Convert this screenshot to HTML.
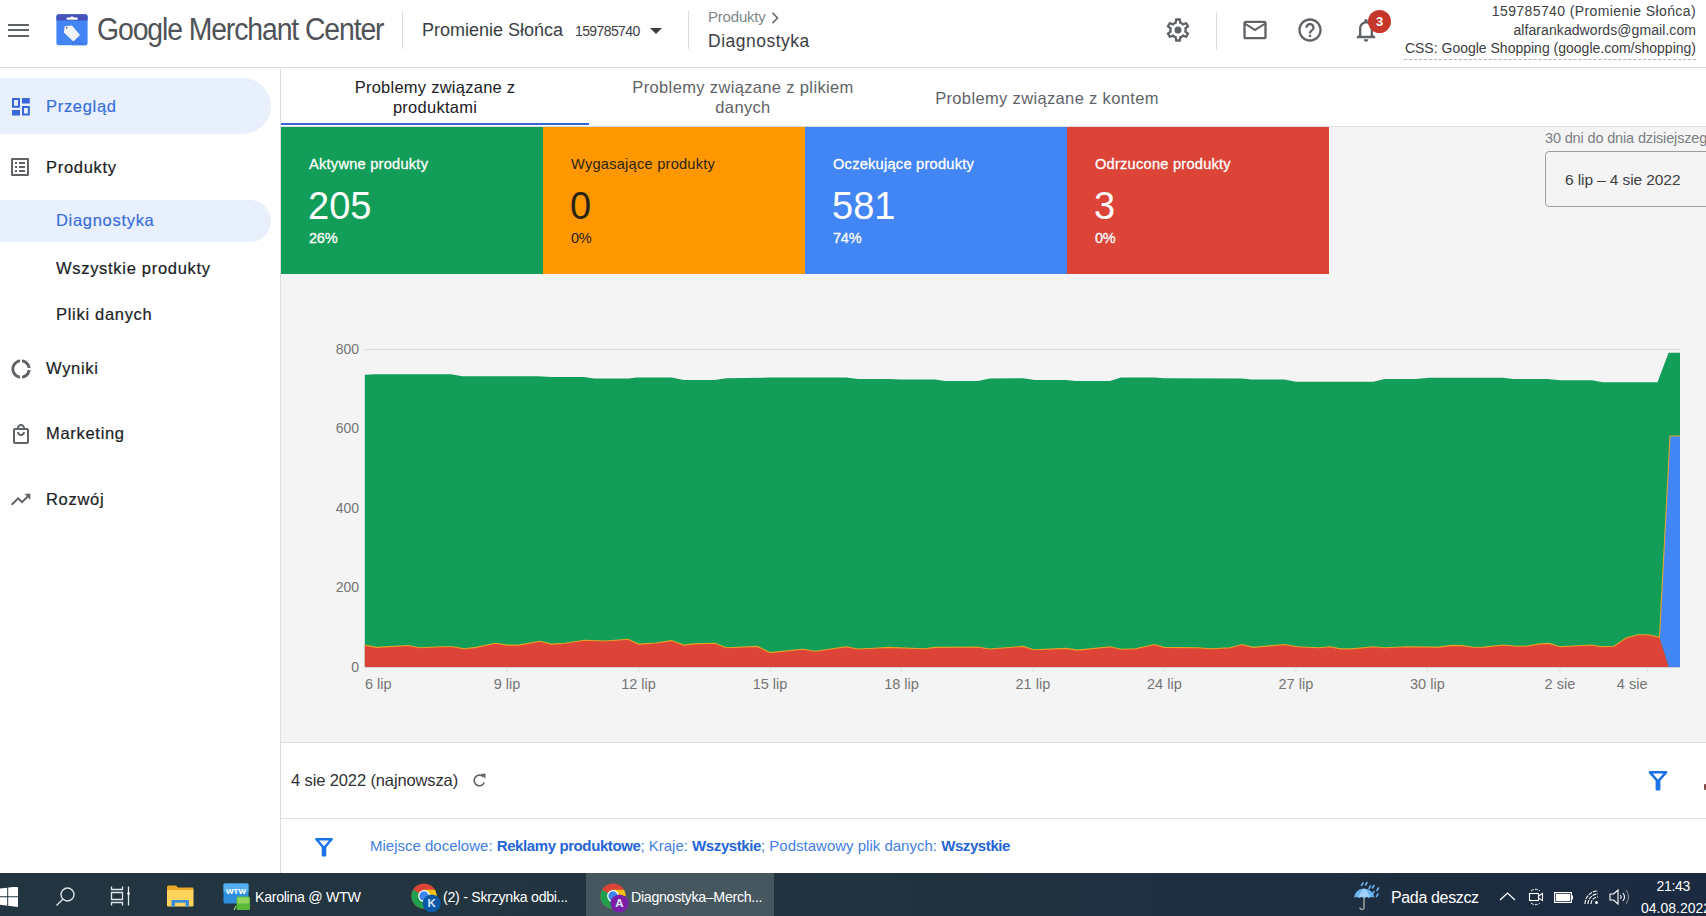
<!DOCTYPE html>
<html><head><meta charset="utf-8">
<style>
*{margin:0;padding:0;box-sizing:border-box}
html,body{width:1706px;height:916px;overflow:hidden;background:#fff;font-family:"Liberation Sans",sans-serif;color:#202124}
.a{position:absolute;white-space:nowrap}
#hdr{position:absolute;left:0;top:0;width:1706px;height:68px;background:#fff;border-bottom:1px solid #dadce0}
#side{position:absolute;left:0;top:69px;width:281px;height:804px;background:#fff;border-right:1px solid #dadce0}
#main{position:absolute;left:281px;top:69px;width:1425px;height:804px;background:#f4f4f4}
#tabs{position:absolute;left:0;top:0;width:1425px;height:58px;background:#fff;border-bottom:1px solid #dadce0}
.tab{position:absolute;text-align:center;font-size:16.5px;line-height:20px;color:#5f6368}
.card{position:absolute;top:58px;height:147px;color:#fff}
.card .t{position:absolute;left:28px;top:28.5px;font-size:14.6px;letter-spacing:0.25px;-webkit-text-stroke:0.3px currentColor}
.card .n{position:absolute;left:27px;top:58px;font-size:38px}
.card .p{position:absolute;left:28px;top:103px;font-size:14.5px;letter-spacing:-0.2px;-webkit-text-stroke:0.3px currentColor}
#task{position:absolute;left:0;top:873px;width:1706px;height:43px;background:linear-gradient(to right,#223540 0%,#213440 45%,#1b2a40 100%)}
.yl{left:300px;width:59px;text-align:right;font-size:14px;color:#757575}
.xl{top:676px;font-size:14.5px;color:#757575}
.ttxt{position:absolute;top:16.1px;font-size:14.2px;color:#fff;white-space:nowrap}
</style></head><body>
<div id="hdr">
  <!-- hamburger -->
  <div class="a" style="left:8px;top:24px;width:21px;height:2px;background:#5f6368"></div>
  <div class="a" style="left:8px;top:29px;width:21px;height:2px;background:#5f6368"></div>
  <div class="a" style="left:8px;top:35px;width:21px;height:2px;background:#5f6368"></div>
  <!-- logo -->
  <svg class="a" style="left:56px;top:14px" width="32" height="32" viewBox="0 0 32 32">
    <rect x="0.4" y="0.2" width="31.2" height="31" rx="2.5" fill="#4285f4"/>
    <path d="M16 21 L31.6 31.2 H16Z" fill="#3b78e7" opacity="0.6"/>
    <path d="M0.4 2.7 Q0.4 0.2 2.9 0.2 H29.1 Q31.6 0.2 31.6 2.7 V6.6 H0.4Z" fill="#4551bd"/>
    <rect x="10.4" y="3.6" width="11.4" height="2.2" rx="1.1" fill="#fff"/>
    <path d="M13.5 4 Q16 1.2 18.5 4Z" fill="#fff"/>
    <path d="M8.6 12.2 L16 11.6 L24 21 L17.4 27.6 L7.8 18.4Z" fill="#f1f3f4"/>
    <circle cx="10.6" cy="13.8" r="0.9" fill="#5a6a8a"/>
  </svg>
  <div class="a" style="left:97px;top:11.5px;font-size:31px;color:#4f5257;letter-spacing:-1.2px;transform:scaleX(0.915);transform-origin:0 0">Google Merchant Center</div>
  <div class="a" style="left:402px;top:11px;width:1px;height:38px;background:#dadce0"></div>
  <div class="a" style="left:422px;top:19.8px;font-size:18px;color:#3c4043">Promienie Słońca</div>
  <div class="a" style="left:575px;top:23.4px;font-size:14px;color:#3c4043;letter-spacing:-0.6px">159785740</div>
  <svg class="a" style="left:649px;top:26.8px" width="14" height="8" viewBox="0 0 14 8"><path d="M1 1 L7 7 L13 1Z" fill="#3c4043"/></svg>
  <div class="a" style="left:688px;top:11px;width:1px;height:38px;background:#dadce0"></div>
  <div class="a" style="left:708px;top:8px;font-size:15px;color:#80868b;letter-spacing:-0.2px">Produkty</div>
  <svg class="a" style="left:770px;top:11px" width="10" height="14" viewBox="0 0 10 14"><path d="M2.5 1.8 L7.5 7 L2.5 12.2" stroke="#5f6368" stroke-width="1.6" fill="none"/></svg>
  <div class="a" style="left:708px;top:30.8px;font-size:17.5px;color:#3c4043;letter-spacing:0.5px">Diagnostyka</div>
  <!-- icons -->
  <svg class="a" style="left:1164.2px;top:16.3px" width="28" height="28" viewBox="0 0 24 24"><path fill="#5f6368" d="M19.43 12.98c.04-.32.07-.64.07-.98 0-.34-.03-.66-.07-.98l2.11-1.65c.19-.15.24-.42.12-.64l-2-3.46a.5.5 0 0 0-.61-.22l-2.49 1c-.52-.4-1.08-.73-1.690-.98l-.38-2.65A.488.488 0 0 0 14 2h-4c-.25 0-.46.18-.49.42l-.38 2.65c-.61.25-1.17.59-1.69.98l-2.49-1a.566.566 0 0 0-.18-.03c-.17 0-.34.09-.43.25l-2 3.46c-.13.22-.07.49.12.64l2.11 1.65c-.04.32-.07.65-.07.98 0 .33.03.66.07.98l-2.11 1.65c-.19.15-.24.42-.12.64l2 3.46a.5.5 0 0 0 .61.22l2.49-1c.52.4 1.08.73 1.69.98l.38 2.65c.03.24.24.42.49.42h4c.25 0 .46-.18.49-.42l.38-2.65c.61-.25 1.17-.59 1.69-.98l2.49 1c.06.02.12.03.18.03.17 0 .34-.09.43-.25l2-3.46c.12-.22.07-.49-.12-.64l-2.11-1.65zm-1.98-1.71c.04.31.05.52.05.73 0 .21-.02.43-.05.73l-.14 1.13.89.7 1.08.84-.7 1.21-1.270-.51-1.04-.42-.9.68c-.43.32-.84.56-1.25.73l-1.06.43-.16 1.130-.2 1.35h-1.4l-.19-1.35-.16-1.13-1.06-.43c-.43-.18-.83-.41-1.23-.71l-.91-.7-1.06.43-1.27.51-.7-1.21 1.08-.84.89-.7-.14-1.13c-.03-.31-.05-.54-.05-.74s.02-.43.05-.73l.14-1.13-.89-.7-1.08-.84.7-1.21 1.27.51 1.04.42.9-.68c.43-.32.84-.56 1.25-.73l1.06-.43.16-1.13.2-1.35h1.39l.19 1.35.16 1.13 1.06.43c.43.18.83.41 1.23.71l.91.7 1.06-.43 1.27-.51.7 1.21-1.07.85-.89.7.14 1.13z"/><circle cx="12" cy="12" r="3" fill="#5f6368"/></svg>
  <div class="a" style="left:1216px;top:12px;width:1px;height:38px;background:#dadce0"></div>
  <svg class="a" style="left:1240.6px;top:16.4px" width="28" height="28" viewBox="0 0 24 24"><path fill="#5f6368" d="M22 6c0-1.1-.9-2-2-2H4c-1.1 0-2 .9-2 2v12c0 1.1.9 2 2 2h16c1.1 0 2-.9 2-2V6zm-2 0l-8 5-8-5h16zm0 12H4V8l8 5 8-5v10z"/></svg>
  <svg class="a" style="left:1296px;top:16px" width="28" height="28" viewBox="0 0 24 24"><path fill="#5f6368" d="M11 18h2v-2h-2v2zm1-16C6.48 2 2 6.48 2 12s4.48 10 10 10 10-4.48 10-10S17.52 2 12 2zm0 18c-4.41 0-8-3.59-8-8s3.59-8 8-8 8 3.59 8 8-3.59 8-8 8zm0-14c-2.21 0-4 1.79-4 4h2c0-1.1.9-2 2-2s2 .9 2 2c0 2-3 1.75-3 5h2c0-2.25 3-2.5 3-5 0-2.21-1.79-4-4-4z"/></svg>
  <svg class="a" style="left:1352px;top:16px" width="28" height="28" viewBox="0 0 24 24"><path fill="#5f6368" d="M12 22c1.1 0 2-.9 2-2h-4c0 1.1.89 2 2 2zm6-6v-5c0-3.07-1.64-5.64-4.5-6.32V4c0-.83-.67-1.5-1.5-1.5s-1.5.67-1.5 1.5v.68C7.63 5.36 6 7.92 6 11v5l-2 2v1h16v-1l-2-2zm-2 1H8v-6c0-2.48 1.51-4.5 4-4.5s4 2.02 4 4.5v6z"/></svg>
  <div class="a" style="left:1367px;top:9px;width:24px;height:24px;border-radius:12px;background:#c5372a;color:#fff;font-size:13px;font-weight:bold;text-align:center;line-height:23px;width:23px;height:23px;left:1368px;top:10px">3</div>
  <div class="a" style="right:10px;top:3px;font-size:14px;color:#3c4043;text-align:right;letter-spacing:0.4px">159785740 (Promienie Słońca)</div>
  <div class="a" style="right:10px;top:21.6px;font-size:14px;color:#3c4043;text-align:right;letter-spacing:0.07px">alfarankadwords@gmail.com</div>
  <div class="a" style="right:10px;top:40.2px;font-size:14px;color:#3c4043;text-align:right">CSS: Google Shopping (google.com/shopping)</div><div class="a" style="left:1404px;top:58.5px;width:292px;height:0;border-top:1.5px dashed #b0b4b8"></div>
</div>

<div id="side">
  <div class="a" style="left:0;top:9px;width:271px;height:56px;background:#e8f0fe;border-radius:0 28px 28px 0"></div>
  <svg class="a" style="left:12px;top:29px" width="18" height="18" viewBox="0 0 18 18"><path fill="#3767d9" fill-rule="evenodd" d="M0 0h8v9.7H0zM2 2v5.7h4V2zM10 0h7.8v5.6H10zM0 12.1h8v5.4H0zM10 8.1h7.8v9.4H10zM12 10v5.6h3.9V10z"/></svg>
  <div class="a" style="left:46px;top:28.1px;font-size:16.5px;letter-spacing:0.7px;-webkit-text-stroke:0.2px currentColor;color:#3b6fd8">Przegląd</div>

  <svg class="a" style="left:8px;top:86.4px" width="24" height="24" viewBox="0 0 24 24"><path fill="#5f6368" d="M19 5v14H5V5h14m1.1-2H3.9c-.5 0-.9.4-.9.9v16.2c0 .4.4.9.9.9h16.2c.4 0 .9-.5.9-.9V3.9c0-.5-.5-.9-.9-.9zM11 7h6v2h-6V7zm0 4h6v2h-6v-2zm0 4h6v2h-6zM7 7h2v2H7zm0 4h2v2H7zm0 4h2v2H7z"/></svg>
  <div class="a" style="left:46px;top:88.7px;font-size:16.5px;letter-spacing:0.7px;-webkit-text-stroke:0.2px currentColor;color:#202124">Produkty</div>

  <div class="a" style="left:0;top:131px;width:271px;height:42px;background:#e8f0fe;border-radius:0 21px 21px 0"></div>
  <div class="a" style="left:56px;top:141.8px;font-size:16.5px;letter-spacing:0.7px;-webkit-text-stroke:0.2px currentColor;color:#3b6fd8">Diagnostyka</div>
  <div class="a" style="left:56px;top:189.5px;font-size:16.5px;letter-spacing:0.7px;-webkit-text-stroke:0.2px currentColor;color:#202124">Wszystkie produkty</div>
  <div class="a" style="left:56px;top:235.5px;font-size:16.5px;letter-spacing:0.7px;-webkit-text-stroke:0.2px currentColor;color:#202124">Pliki danych</div>

  <svg class="a" style="left:8.7px;top:287.6px" width="24" height="24" viewBox="0 0 24 24"><g transform="translate(12 12) scale(0.96) translate(-12 -12)"><path fill="#5f6368" d="M11 5.08V2c-5 .5-9 4.81-9 10s4 9.5 9 10v-3.08c-3-.48-6-3.4-6-6.92s3-6.44 6-6.92zM18.97 11H22c-.47-5-4-8.53-9-9v3.08C16 5.51 18.54 8 18.97 11zM13 18.92V22c5-.47 8.53-4 9-9h-3.03c-.43 3-2.97 5.49-5.97 5.92z"/></g></svg>
  <div class="a" style="left:46px;top:289.7px;font-size:16.5px;letter-spacing:0.7px;-webkit-text-stroke:0.2px currentColor;color:#202124">Wyniki</div>

  <svg class="a" style="left:8.5px;top:353px" width="24" height="24" viewBox="0 0 24 24"><path fill="#5f6368" d="M18 6h-2c0-2.21-1.79-4-4-4S8 3.79 8 6H6c-1.1 0-2 .9-2 2v12c0 1.1.9 2 2 2h12c1.1 0 2-.9 2-2V8c0-1.1-.9-2-2-2zm-6-2c1.1 0 2 .9 2 2h-4c0-1.1.9-2 2-2zm6 16H6V8h12v12zm-6-8c-1.1 0-2-.9-2-2H8c0 2.210 1.79 4 4 4s4-1.79 4-4h-2c0 1.1-.9 2-2 2z"/></svg>
  <div class="a" style="left:46px;top:355.1px;font-size:16.5px;letter-spacing:0.7px;-webkit-text-stroke:0.2px currentColor;color:#202124">Marketing</div>

  <svg class="a" style="left:9px;top:418.8px" width="23.3" height="23.3" viewBox="0 0 24 24"><path fill="#5f6368" d="M16 6l2.29 2.29-4.88 4.88-4-4L2 16.59 3.41 18l6-6 4 4 6.3-6.29L22 12V6z"/></svg>
  <div class="a" style="left:46px;top:420.6px;font-size:16.5px;letter-spacing:0.7px;-webkit-text-stroke:0.2px currentColor;color:#202124">Rozwój</div>
</div>

<div id="main">
  <div id="tabs">
    <div class="tab" style="left:0;top:7.5px;width:308px;color:#202124;letter-spacing:0.25px">Problemy związane z<br>produktami</div>
    <div class="tab" style="left:308px;top:8px;width:308px;letter-spacing:0.35px">Problemy związane z plikiem<br>danych</div>
    <div class="tab" style="left:616px;top:18.5px;width:300px;letter-spacing:0.35px">Problemy związane z kontem</div>
    <div class="a" style="left:0;top:54px;width:308px;height:2px;background:#3367d6"></div>
  </div>
  <div class="card" style="left:0;width:262px;background:#129d58">
    <div class="t">Aktywne produkty</div><div class="n">205</div><div class="p">26%</div>
  </div>
  <div class="card" style="left:262px;width:262px;background:#ff9800;color:#2a2418">
    <div class="t" style="-webkit-text-stroke:0">Wygasające produkty</div><div class="n">0</div><div class="p" style="-webkit-text-stroke:0">0%</div>
  </div>
  <div class="card" style="left:524px;width:262px;background:#4285f4">
    <div class="t">Oczekujące produkty</div><div class="n">581</div><div class="p">74%</div>
  </div>
  <div class="card" style="left:786px;width:262px;background:#db4437">
    <div class="t">Odrzucone produkty</div><div class="n">3</div><div class="p">0%</div>
  </div>
  <div class="a" style="left:1264px;top:61px;font-size:14.5px;color:#7c7f84;letter-spacing:-0.15px">30 dni do dnia dzisiejszego</div>
  <div class="a" style="left:1264px;top:82px;width:200px;height:56px;border:1px solid #9e9e9e;border-radius:4px;background:#f4f4f4"></div>
  <div class="a" style="left:1284px;top:102px;font-size:15.5px;color:#3c4043;letter-spacing:-0.1px">6 lip – 4 sie 2022</div>


  <div class="a" style="left:0;top:673px;width:1425px;height:131px;background:#fff;border-top:1px solid #e0e0e0"></div>
  <div class="a" style="left:10px;top:702px;font-size:16.5px;color:#303134;letter-spacing:-0.12px">4 sie 2022 (najnowsza)</div>
  <div class="a" style="left:0;top:749px;width:1425px;height:1px;background:#e0e0e0"></div>
</div>

<!--CHART-->
<svg class="a" style="left:300px;top:330px" width="1406" height="380" viewBox="300 330 1406 380">
<line x1="365" y1="349.5" x2="1680" y2="349.5" stroke="#dcdcdc" stroke-width="1.2"/>
<polygon points="364.8,374.7 375.5,374.3 451.0,374.3 462.5,376.2 538.0,376.2 551.5,377.0 584.0,377.0 594.0,378.5 629.0,378.5 636.6,377.6 671.4,377.6 684.0,380.0 714.8,380.0 726.4,378.2 769.0,377.6 846.3,377.6 858.0,378.9 889.0,378.9 900.5,379.5 935.0,379.5 945.0,380.9 977.9,380.9 989.5,378.5 1023.0,378.2 1034.8,380.0 1065.8,380.0 1075.4,380.9 1110.0,380.9 1121.0,377.4 1154.7,377.4 1164.4,378.2 1241.8,378.5 1251.4,379.5 1284.3,379.5 1296.0,381.8 1373.5,381.8 1384.6,378.9 1415.8,378.9 1429.0,377.7 1502.7,377.7 1513.8,379.1 1547.2,379.1 1560.6,380.2 1591.8,380.2 1603.0,382.2 1657.5,382.2 1668.6,352.8 1680.0,352.8 1680.0,667.0 364.8,667.0" fill="#129d58"/>
<polygon points="364.8,645.1 376.4,647.4 408.4,645.5 420.0,647.8 441.2,646.8 452.8,646.8 464.4,648.8 476.0,647.4 495.4,643.2 507.0,645.1 518.6,645.1 539.9,641.2 551.5,644.1 565.0,643.2 584.4,640.3 605.6,641.0 627.9,639.3 638.5,644.1 656.0,643.0 671.4,640.6 683.9,645.1 693.5,643.9 714.8,643.2 726.4,647.8 757.4,646.4 770.0,652.6 802.8,649.3 815.4,651.3 846.3,646.8 858.0,649.0 873.4,648.2 888.9,647.4 923.7,648.8 935.3,647.4 977.9,647.0 989.5,649.0 1023.2,646.4 1033.8,649.7 1065.8,648.4 1077.4,650.1 1110.3,646.8 1120.9,649.3 1135.4,648.8 1154.7,644.5 1164.4,647.4 1197.3,647.8 1210.8,648.8 1230.2,647.8 1241.8,644.5 1253.4,647.4 1284.3,644.5 1297.9,646.8 1319.1,647.8 1330.0,646.7 1340.8,648.9 1351.7,648.9 1373.4,646.7 1384.2,647.8 1405.9,646.7 1438.4,647.1 1451.4,645.4 1462.3,645.6 1473.1,647.3 1484.0,647.1 1503.5,645.0 1516.5,646.3 1527.4,646.0 1538.2,644.1 1549.0,643.4 1559.9,646.7 1590.2,645.0 1603.3,646.7 1614.1,646.3 1626.0,638.0 1638.0,634.8 1648.8,634.8 1659.5,637.2 1668.8,667.0 364.8,667.0" fill="#db4437"/>
<polygon points="1659.5,637.2 1670.0,436.0 1680.0,436.0 1680.0,667.0 1668.8,667.0" fill="#4285f4"/>
<polyline points="364.8,645.1 376.4,647.4 408.4,645.5 420.0,647.8 441.2,646.8 452.8,646.8 464.4,648.8 476.0,647.4 495.4,643.2 507.0,645.1 518.6,645.1 539.9,641.2 551.5,644.1 565.0,643.2 584.4,640.3 605.6,641.0 627.9,639.3 638.5,644.1 656.0,643.0 671.4,640.6 683.9,645.1 693.5,643.9 714.8,643.2 726.4,647.8 757.4,646.4 770.0,652.6 802.8,649.3 815.4,651.3 846.3,646.8 858.0,649.0 873.4,648.2 888.9,647.4 923.7,648.8 935.3,647.4 977.9,647.0 989.5,649.0 1023.2,646.4 1033.8,649.7 1065.8,648.4 1077.4,650.1 1110.3,646.8 1120.9,649.3 1135.4,648.8 1154.7,644.5 1164.4,647.4 1197.3,647.8 1210.8,648.8 1230.2,647.8 1241.8,644.5 1253.4,647.4 1284.3,644.5 1297.9,646.8 1319.1,647.8 1330.0,646.7 1340.8,648.9 1351.7,648.9 1373.4,646.7 1384.2,647.8 1405.9,646.7 1438.4,647.1 1451.4,645.4 1462.3,645.6 1473.1,647.3 1484.0,647.1 1503.5,645.0 1516.5,646.3 1527.4,646.0 1538.2,644.1 1549.0,643.4 1559.9,646.7 1590.2,645.0 1603.3,646.7 1614.1,646.3 1626.0,638.0 1638.0,634.8 1648.8,634.8 1659.5,637.2 1670,436 1680,436" fill="none" stroke="#f4a622" stroke-width="1.1" stroke-opacity="0.9"/>
<line x1="365" y1="667.5" x2="1680" y2="667.5" stroke="#d0d0d0" stroke-width="1"/>
<line x1="507.0" y1="667" x2="507.0" y2="672" stroke="#dedede" stroke-width="1"/>
<line x1="638.5" y1="667" x2="638.5" y2="672" stroke="#dedede" stroke-width="1"/>
<line x1="770.0" y1="667" x2="770.0" y2="672" stroke="#dedede" stroke-width="1"/>
<line x1="901.5" y1="667" x2="901.5" y2="672" stroke="#dedede" stroke-width="1"/>
<line x1="1032.9" y1="667" x2="1032.9" y2="672" stroke="#dedede" stroke-width="1"/>
<line x1="1164.4" y1="667" x2="1164.4" y2="672" stroke="#dedede" stroke-width="1"/>
<line x1="1295.9" y1="667" x2="1295.9" y2="672" stroke="#dedede" stroke-width="1"/>
<line x1="1427.4" y1="667" x2="1427.4" y2="672" stroke="#dedede" stroke-width="1"/>
<line x1="1559.9" y1="667" x2="1559.9" y2="672" stroke="#dedede" stroke-width="1"/>
<line x1="1647.7" y1="667" x2="1647.7" y2="672" stroke="#dedede" stroke-width="1"/>
</svg>
<!--/CHART-->
<div class="yl a" style="top:341px">800</div><div class="yl a" style="top:420px">600</div><div class="yl a" style="top:500px">400</div><div class="yl a" style="top:579px">200</div><div class="yl a" style="top:659px">0</div>
<div class="xl a" style="left:365px">6 lip</div>
<div class="xl a" style="left:457.0px;width:100px;text-align:center">9 lip</div>
<div class="xl a" style="left:588.5px;width:100px;text-align:center">12 lip</div>
<div class="xl a" style="left:720.0px;width:100px;text-align:center">15 lip</div>
<div class="xl a" style="left:851.5px;width:100px;text-align:center">18 lip</div>
<div class="xl a" style="left:982.9px;width:100px;text-align:center">21 lip</div>
<div class="xl a" style="left:1114.4px;width:100px;text-align:center">24 lip</div>
<div class="xl a" style="left:1245.9px;width:100px;text-align:center">27 lip</div>
<div class="xl a" style="left:1377.4px;width:100px;text-align:center">30 lip</div>
<div class="xl a" style="left:1509.9px;width:100px;text-align:center">2 sie</div>
<div class="xl a" style="left:1547.5px;width:100px;text-align:right">4 sie</div>
<svg class="a" style="left:472px;top:773px" width="15" height="15" viewBox="0 0 15 15"><path d="M12.3 9.5A5.3 5.3 0 1 1 11.2 3.7" fill="none" stroke="#5f6368" stroke-width="1.6"/><path d="M8.5 0.8H13.5V5.8Z" fill="#5f6368"/></svg>
<svg class="a" style="left:1648px;top:770px" width="20" height="21" viewBox="0 0 20 21"><path d="M2 2.3H18L10 11.5Z" fill="none" stroke="#1a73e8" stroke-width="2.6" stroke-linejoin="round"/><rect x="7.6" y="10" width="4.8" height="10.5" rx="1" fill="#1a73e8"/></svg>
<div class="a" style="left:1704px;top:784px;width:2px;height:5.5px;background:#7d4d4a;border-radius:1px 0 0 1px"></div>
<svg class="a" style="left:314px;top:837px" width="20" height="20" viewBox="0 0 20 21"><path d="M2 2.3H18L10 11.5Z" fill="none" stroke="#1a73e8" stroke-width="2.6" stroke-linejoin="round"/><rect x="7.6" y="10" width="4.8" height="10.5" rx="1" fill="#1a73e8"/></svg>
<div class="a" style="left:370px;top:837px;font-size:15px;color:#4380e2">Miejsce docelowe: <b style="color:#2466d8;letter-spacing:-0.4px">Reklamy produktowe</b>; Kraje: <b style="color:#2466d8;letter-spacing:-0.4px">Wszystkie</b>; Podstawowy plik danych: <b style="color:#2466d8;letter-spacing:-0.4px">Wszystkie</b></div>

<div id="task">
  <!-- windows logo -->
  <svg class="a" style="left:0;top:14px" width="19" height="20" viewBox="0 0 19 20"><path fill="#fff" d="M0 1.6L7.2 0.7V9.2H0zM8.2 0.6L18 -0.6V9.2H8.2zM0 10.2H7.2V18.7L0 17.8zM8.2 10.2H18V20L8.2 18.8z"/></svg>
  <!-- search -->
  <svg class="a" style="left:54px;top:12px" width="24" height="24" viewBox="0 0 24 24"><circle cx="13.5" cy="9.5" r="6.5" fill="none" stroke="#dfe6ea" stroke-width="1.4"/><path d="M8.8 14.2L2.5 20.5" stroke="#dfe6ea" stroke-width="1.4"/></svg>
  <!-- task view -->
  <svg class="a" style="left:110px;top:13px" width="22" height="20" viewBox="0 0 22 20"><path fill="none" stroke="#dfe6ea" stroke-width="1.3" d="M1.5 0.5V3.5H12.5V0.5M1.5 19.5V16.5H12.5V19.5M1.5 6.5H12.5V13.5H1.5Z"/><path stroke="#dfe6ea" stroke-width="1.3" d="M18.5 0.5V19.5"/><circle cx="18.5" cy="7.5" r="1.3" fill="#fff"/></svg>
  <!-- folder -->
  <svg class="a" style="left:167px;top:12px" width="27" height="22" viewBox="0 0 27 22"><path fill="#e9a825" d="M0 2Q0 0.5 1.5 0.5H9L11 2.5H25.5Q26.5 2.5 26.5 3.5V6H0Z"/><path fill="#ffd35c" d="M0 5H26.5V20.5Q26.5 21.5 25.5 21.5H1Q0 21.5 0 20.5Z"/><path fill="#3b8fd9" d="M4.5 21.5V15H22V21.5H18.5V17.8H8V21.5Z"/></svg>
  <!-- wtw -->
  <svg class="a" style="left:223px;top:10px" width="28" height="28" viewBox="0 0 28 28"><rect x="0.5" y="0.5" width="25" height="20" rx="1.5" fill="#2f8fdc"/><rect x="0.5" y="0.5" width="25" height="9" rx="1.5" fill="#56aef0"/><text x="13" y="10.5" font-family="Liberation Sans" font-weight="bold" font-size="8" fill="#fff" text-anchor="middle">WTW</text><path d="M11 27L13 23" stroke="#9ad06a" stroke-width="1.2"/><rect x="13.5" y="13.5" width="13.5" height="13.5" rx="1.5" fill="#5cb838"/><rect x="14.5" y="14.5" width="11.5" height="6" rx="1" fill="#8fd55c"/></svg>
  <div class="ttxt" style="left:255px;letter-spacing:-0.3px">Karolina @ WTW</div>
  <!-- chrome 1 -->
  <svg class="a" style="left:410px;top:9.7px" width="32" height="31" viewBox="0 0 32 31">
    <circle cx="14" cy="13" r="12.6" fill="#db4437"/>
    <path d="M14 13 L3.1 6.7 A12.6 12.6 0 0 0 7.7 23.9Z" fill="#1ea04f"/>
    <path d="M14 13 L7.7 23.9 A12.6 12.6 0 0 0 26.6 13 L24.9 6.7Z" fill="#1ea04f"/>
    <path d="M14 13 L26.6 13 A12.6 12.6 0 0 0 24.9 6.7 L14 6.7Z" fill="#f4c20d"/>
    <circle cx="14" cy="13" r="5.9" fill="#fff"/><circle cx="14" cy="13" r="4.7" fill="#3f85f0"/>
    <circle cx="21.7" cy="20.4" r="9" fill="#0b59a6"/><text x="21.7" y="24.4" font-family="Liberation Sans" font-weight="bold" font-size="11.5" fill="#dbe8ff" text-anchor="middle">K</text>
  </svg>
  <div class="ttxt" style="left:443px;letter-spacing:-0.28px">(2) - Skrzynka odbi...</div>
  <div class="a" style="left:586px;top:0;width:188px;height:43px;background:#465760"></div>
  <svg class="a" style="left:599px;top:9.7px" width="32" height="31" viewBox="0 0 32 31">
    <circle cx="14" cy="13" r="12.6" fill="#db4437"/>
    <path d="M14 13 L3.1 6.7 A12.6 12.6 0 0 0 7.7 23.9Z" fill="#1ea04f"/>
    <path d="M14 13 L7.7 23.9 A12.6 12.6 0 0 0 26.6 13 L24.9 6.7Z" fill="#1ea04f"/>
    <path d="M14 13 L26.6 13 A12.6 12.6 0 0 0 24.9 6.7 L14 6.7Z" fill="#f4c20d"/>
    <circle cx="14" cy="13" r="5.9" fill="#fff"/><circle cx="14" cy="13" r="4.7" fill="#3f85f0"/>
    <circle cx="20.5" cy="20.4" r="9" fill="#7b1fa8"/><text x="20.5" y="24.4" font-family="Liberation Sans" font-weight="bold" font-size="11.5" fill="#dbe8ff" text-anchor="middle">A</text>
  </svg>
  <div class="ttxt" style="left:631px;letter-spacing:-0.3px">Diagnostyka–Merch...</div>
  <!-- weather -->
  <svg class="a" style="left:1352px;top:9px" width="30" height="29" viewBox="0 0 30 29">
    <path d="M2 16 Q3 7 12 6.5 Q21 7 22.5 16 Q20 14 17.5 16 Q15 14 12.3 16 Q9.5 14 7 16 Q4.5 14 2 16Z" fill="#6cb4ef"/>
    <path d="M12.3 6.5 Q8 9 7 16 Q9.5 14 12.3 16 Q15 14 17.5 16 Q16.5 9 12.3 6.5Z" fill="#9fd0f7"/>
    <path d="M12 16V25.5Q12 27.5 10 27.5Q8 27.5 8 25.5" fill="none" stroke="#9a9a9a" stroke-width="1.6"/>
    <path d="M11 1L9.5 3.5M15 0.5L13.5 3M18.5 4L17 6.5M22 3.5L20.5 6M22 9.5L20.5 12M26.5 6L25 8.5M26 12L24.5 14.5" stroke="#6cb4ef" stroke-width="1.6" stroke-linecap="round"/>
  </svg>
  <div class="ttxt" style="left:1391px;top:15.9px;font-size:16px;letter-spacing:-0.35px">Pada deszcz</div>
  <svg class="a" style="left:1499px;top:19px" width="17" height="9" viewBox="0 0 17 9"><path d="M1 8L8.5 1L16 8" fill="none" stroke="#fff" stroke-width="1.2"/></svg>
  <svg class="a" style="left:1528px;top:15px" width="16" height="18" viewBox="0 0 16 18"><path d="M3 3Q7.5 -0.5 12 3M3 15Q7.5 18.5 12 15" fill="none" stroke="#fff" stroke-width="1" stroke-dasharray="3 1.2"/><rect x="1.5" y="5.5" width="9" height="7" fill="none" stroke="#fff" stroke-width="1.1"/><path d="M10.5 8L14.5 5.5V12.5L10.5 10Z" fill="none" stroke="#fff" stroke-width="1.1"/></svg>
  <svg class="a" style="left:1554px;top:19px" width="20" height="11" viewBox="0 0 20 11"><rect x="0.6" y="0.6" width="16.8" height="9.8" fill="none" stroke="#fff" stroke-width="1.2"/><rect x="2" y="2" width="14" height="7" fill="#fff"/><rect x="17.5" y="3.5" width="1.5" height="4" fill="#fff"/></svg>
  <svg class="a" style="left:1584px;top:17px" width="16" height="15" viewBox="0 0 16 15"><path d="M1 14A13 13 0 0 1 14 1M4 14A10 10 0 0 1 14 4M7 14A7 7 0 0 1 14 7" fill="none" stroke="#fff" stroke-width="1.1" stroke-dasharray="4 1"/><circle cx="12.5" cy="12.5" r="1.5" fill="#fff"/></svg>
  <svg class="a" style="left:1609px;top:15px" width="22" height="18" viewBox="0 0 22 18"><path d="M1 6H4.5L9 2V16L4.5 12H1Z" fill="none" stroke="#fff" stroke-width="1.1"/><path d="M11.5 7Q13 9 11.5 11M14 5Q17 9 14 13" fill="none" stroke="#fff" stroke-width="1.1"/><path d="M17 2Q22 9 17 16" fill="none" stroke="#8a96a0" stroke-width="1"/></svg>
  <div class="ttxt" style="left:1656.5px;top:5px;font-size:14px;letter-spacing:-0.3px">21:43</div>
  <div class="ttxt" style="left:1641px;top:26.6px;font-size:14px">04.08.2022</div>
</div>
</body></html>
